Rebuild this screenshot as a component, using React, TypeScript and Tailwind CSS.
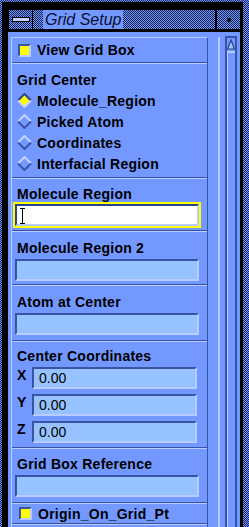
const DITHER =
  "bg-[image:repeating-conic-gradient(#17224f_0_25%,#7398ff_0_50%)] bg-[length:2px_2px]";

function Sep() {
  return <div className="h-[2px] border-t border-b border-t-[#3a54a4] border-b-[#b9ccff]" />;
}

function Field({ value, className = "" }: { value?: string; className?: string }) {
  return (
    <div
      className={`h-[22px] border-2 border-t-[#3a54a4] border-l-[#3a54a4] border-b-[#b9ccff] border-r-[#b9ccff] bg-[#96c3ff] pl-[5px] text-[14px] font-normal leading-[18px] tracking-normal text-black ${className}`}
    >
      {value}
    </div>
  );
}

function Check() {
  return (
    <div className="h-[13px] w-[13px] border-2 border-t-[#3a54a4] border-l-[#3a54a4] border-b-[#b9ccff] border-r-[#b9ccff] bg-[#ffff00]" />
  );
}

function Diamond({ on }: { on?: boolean }) {
  const tl = on ? "#2c438c" : "#c4d4ff";
  const br = on ? "#c4d4ff" : "#3a54a4";
  return (
    <svg width="15" height="15" viewBox="0 0 15 15">
      <polygon points="7.5,1 14,7.5 7.5,14 1,7.5" fill={on ? "#ffff00" : "#7398ff"} />
      <polyline points="1,7.5 7.5,1 14,7.5" fill="none" stroke={tl} strokeWidth="2" />
      <polyline points="1,7.5 7.5,14 14,7.5" fill="none" stroke={br} strokeWidth="2" />
    </svg>
  );
}

function Label({ children }: { children: React.ReactNode }) {
  return <div className="pl-[5px] leading-[16px]">{children}</div>;
}

export default function App() {
  const radios = ["Molecule_Region", "Picked Atom", "Coordinates", "Interfacial Region"];

  return (
    <div
      className={`h-[527px] w-[249px] overflow-hidden pl-[2px] pr-[6px] pt-[2px] font-['Liberation_Sans',Arial,sans-serif] ${DITHER}`}
    >
      <div className="flex h-full flex-col bg-black pl-[6px] pr-[3px] pt-[6px]">
        {/* title bar */}
        <div className="flex h-[24px] bg-black pb-[3px] pl-[1px] pt-[2px]">
          <div className={`flex w-[23px] items-center justify-center ${DITHER}`}>
            <div className="h-[5px] w-[18px] border border-black bg-[#c4d4ff]" />
          </div>
          <div className={`ml-[1px] flex flex-1 items-center ${DITHER}`}>
            <span className="ml-[10px] bg-[#7398ff] px-[2px] text-[16px] italic leading-[19px] text-[#0b1030]">
              Grid Setup
            </span>
          </div>
          <div className={`ml-[2px] flex w-[23px] items-center justify-center ${DITHER}`}>
            <div className="h-[4px] w-[4px] rounded-full bg-black" />
          </div>
        </div>

        {/* content */}
        <div className="flex flex-1 bg-[#7398ff] pl-[3px] pt-[5px] text-[14px] font-bold tracking-[0.25px] text-black">
          <div className="w-[197px] border-l border-r border-t border-l-[#b9ccff] border-r-[#3a54a4] border-t-[#b9ccff]">
            <div className="flex h-[24px] items-center gap-[6px] pl-[6px]">
              <Check />
              <span className="leading-[16px]">View Grid Box</span>
            </div>
            <Sep />
            <div className="pb-[3px] pt-[8px]">
              <Label>Grid Center</Label>
              <div className="mt-[2px]">
                {radios.map((r, i) => (
                  <div key={r} className="flex h-[21px] items-center gap-[5px] pl-[5px]">
                    <Diamond on={i === 0} />
                    <span className="leading-[16px]">{r}</span>
                  </div>
                ))}
              </div>
            </div>
            <Sep />
            <div className="pb-[2px] pt-[7px]">
              <Label>Molecule Region</Label>
              <div className="ml-[1px] mr-[6px] border-2 border-[#ffff00]">
                <div className="relative h-[22px] border-2 border-t-[#2c438c] border-l-[#2c438c] border-b-[#b9ccff] border-r-[#b9ccff] bg-white">
                  <svg className="absolute left-[3px] top-[2px]" width="5" height="16" viewBox="0 0 5 16">
                    <path d="M0 0.5H5M0 15.5H5M2.5 0V16" stroke="black" strokeWidth="1" fill="none" />
                  </svg>
                </div>
              </div>
            </div>
            <Sep />
            <div className="pb-[3px] pt-[8px]">
              <Label>Molecule Region 2</Label>
              <Field className="ml-[3px] mr-[8px] mt-[3px]" />
            </div>
            <Sep />
            <div className="pb-[5px] pt-[8px]">
              <Label>Atom at Center</Label>
              <Field className="ml-[3px] mr-[8px] mt-[3px]" />
            </div>
            <Sep />
            <div className="pb-[4px] pt-[6px]">
              <Label>Center Coordinates</Label>
              <div className="mt-[3px] flex flex-col gap-[5px]">
                {["X", "Y", "Z"].map((a) => (
                  <div key={a} className="flex items-start">
                    <span className="w-[20px] pl-[5px] leading-[16px]">{a}</span>
                    <Field value="0.00" className="mr-[10px] flex-1" />
                  </div>
                ))}
              </div>
            </div>
            <Sep />
            <div className="pb-[5px] pt-[7px]">
              <Label>Grid Box Reference</Label>
              <Field className="ml-[3px] mr-[8px] mt-[3px]" />
            </div>
            <Sep />
            <div className="flex h-[19px] items-center gap-[6px] pl-[7px]">
              <Check />
              <span className="leading-[16px]">Origin_On_Grid_Pt</span>
            </div>
            <Sep />
          </div>

          {/* right margin and scrollbar */}
          <div className="w-[10px]" />
          <div className="w-[2px] bg-[#b9ccff]" />
          <div className="w-[5px]" />
          <div className="-mt-[1px] flex w-[12px] flex-col border-l-2 border-r-2 border-t-2 border-[#3a54a4]">
            <svg width="8" height="11" viewBox="0 0 8 11" className="mt-[1px]">
              <polygon points="4,1 7.5,10 0.5,10" fill="#96c3ff" stroke="#2c438c" strokeWidth="1.2" />
            </svg>
            <div className="mt-[1px] flex-1 border-l border-t-2 border-l-[#b9ccff] border-t-[#b9ccff]" />
          </div>
          <div className="w-[3px]" />
        </div>
      </div>
    </div>
  );
}
